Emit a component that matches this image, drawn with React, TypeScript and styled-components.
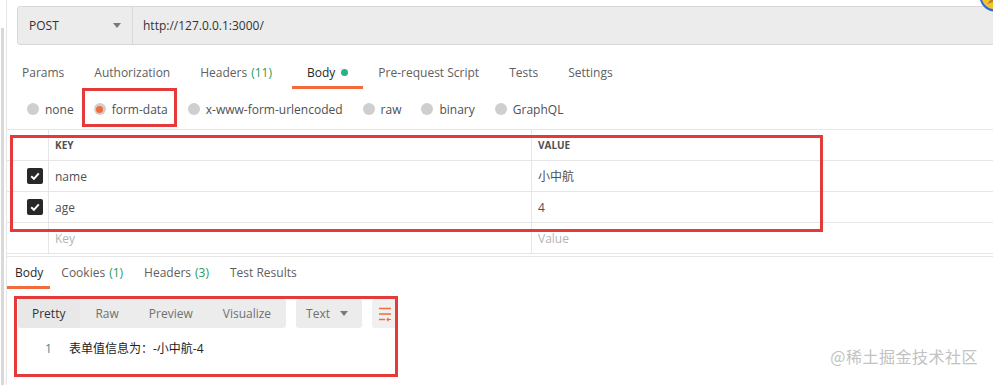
import styled, { createGlobalStyle } from "styled-components";

const GlobalStyle = createGlobalStyle`
    html, body {
        margin: 0;
        padding: 0;
        background: #ffffff;
        font-family: "Open Sans", "Noto Sans CJK SC", sans-serif;
        font-size: 12px;
        color: #505050;
        overflow: hidden;
    }
`;

const requestTabs = [
    { label: "Params" },
    { label: "Authorization" },
    { label: "Headers", count: "(11)" },
    { label: "Body", dot: true, active: true },
    { label: "Pre-request Script" },
    { label: "Tests" },
    { label: "Settings" },
];

const bodyModes = [
    { label: "none" },
    { label: "form-data", checked: true, marked: true },
    { label: "x-www-form-urlencoded" },
    { label: "raw" },
    { label: "binary" },
    { label: "GraphQL" },
];

const rows = [
    { key: "name", value: "小中航" },
    { key: "age", value: "4" },
];

const responseTabs = [
    { label: "Body", active: true },
    { label: "Cookies", count: "(1)" },
    { label: "Headers", count: "(3)" },
    { label: "Test Results" },
];

export default function App() {
    return (
        <>
            <GlobalStyle />
            <Page>
                <Gutter />
                <Main>
                    <UrlBar>
                        <Method>
                            POST
                            <Caret />
                        </Method>
                        <Url>http://127.0.0.1:3000/</Url>
                    </UrlBar>

                    <Tabs>
                        {requestTabs.map((t) => (
                            <Tab key={t.label} $active={t.active} $wide={t.dot}>
                                {t.label}
                                {t.count && <Count>{t.count}</Count>}
                                {t.dot && <Dot />}
                            </Tab>
                        ))}
                    </Tabs>

                    <Modes>
                        {bodyModes.map((m) => (
                            <Mode key={m.label} $marked={m.marked}>
                                <Radio $checked={m.checked} />
                                {m.label}
                            </Mode>
                        ))}
                    </Modes>

                    <Table>
                        <Highlight $left={3} $top={5} $width={807} $height={91} />
                        <Row $head>
                            <CheckCell />
                            <KeyCell>KEY</KeyCell>
                            <ValueCell>VALUE</ValueCell>
                        </Row>
                        {rows.map((r) => (
                            <Row key={r.key}>
                                <CheckCell>
                                    <Checkbox>
                                        <svg width="12" height="12" viewBox="0 0 12 12">
                                            <path d="M2.2 6.2 L4.9 8.8 L9.8 3.4" fill="none" stroke="#fff" strokeWidth="2" />
                                        </svg>
                                    </Checkbox>
                                </CheckCell>
                                <KeyCell>{r.key}</KeyCell>
                                <ValueCell>{r.value}</ValueCell>
                            </Row>
                        ))}
                        <Row>
                            <CheckCell />
                            <KeyCell $placeholder>Key</KeyCell>
                            <ValueCell $placeholder>Value</ValueCell>
                        </Row>
                    </Table>

                    <Response>
                        <Tabs $small>
                            {responseTabs.map((t) => (
                                <Tab key={t.label} $active={t.active} $small>
                                    {t.label}
                                    {t.count && <Count>{t.count}</Count>}
                                </Tab>
                            ))}
                        </Tabs>

                        <ResultBox>
                            <Highlight $left={-4} $top={-3} $width={378} $height={75} />
                            <Toolbar>
                                <Segments>
                                    <Segment $active>Pretty</Segment>
                                    <Segment>Raw</Segment>
                                    <Segment>Preview</Segment>
                                    <Segment>Visualize</Segment>
                                </Segments>
                                <Select>
                                    Text
                                    <Caret />
                                </Select>
                                <WrapButton>
                                    <svg width="14" height="16" viewBox="0 0 14 16">
                                        <path d="M1 2.5 H13 M1 8 H13 M1 13.5 H7" stroke="#f26b3a" strokeWidth="1.6" fill="none" />
                                        <path d="M9 13.5 H13 M10.5 11.8 L9 13.5 L10.5 15.2" stroke="#f26b3a" strokeWidth="1.2" fill="none" />
                                    </svg>
                                </WrapButton>
                            </Toolbar>
                            <CodeLine>
                                <LineNo>1</LineNo>
                                <Code>表单值信息为：-小中航-4</Code>
                            </CodeLine>
                        </ResultBox>
                    </Response>
                </Main>
                <Avatar>
                    <svg width="32" height="32" viewBox="0 0 32 32">
                        <circle cx="16" cy="16" r="14.5" fill="#f2c230" stroke="#2d6bd8" strokeWidth="2" />
                        <path d="M8 24 L20 10 L26 18 Z" fill="#8a5a1a" opacity="0.6" />
                    </svg>
                </Avatar>
                <Watermark>@稀土掘金技术社区</Watermark>
            </Page>
        </>
    );
}

const Page = styled.div`
    position: relative;
    display: flex;
    width: 993px;
    height: 385px;
    overflow: hidden;
`;

const Gutter = styled.div`
    width: 6px;
    flex-shrink: 0;
    &::before {
        content: "";
        display: block;
        margin: 28px 0 0 1px;
        width: 3px;
        height: 360px;
        background: #d9d9d9;
    }
`;

const Main = styled.div`
    flex: 1;
    border-left: 1px solid #e6e6e6;
    padding-top: 6px;
    min-width: 0;
`;

const UrlBar = styled.div`
    display: flex;
    height: 37px;
    margin-left: 10px;
    margin-right: -20px;
    background: #ececec;
    border: 1px solid #d8d8d8;
    border-radius: 3px;
`;

const Method = styled.div`
    display: flex;
    align-items: center;
    justify-content: space-between;
    box-sizing: border-box;
    width: 115px;
    padding: 0 11px 0 11px;
    border-right: 1px solid #d8d8d8;
    color: #333;
    font-size: 12px;
`;

const Caret = styled.span`
    width: 0;
    height: 0;
    border-left: 4px solid transparent;
    border-right: 4px solid transparent;
    border-top: 5px solid #7a7a7a;
`;

const Url = styled.div`
    display: flex;
    align-items: center;
    padding-left: 10px;
    color: #333;
`;

const Tabs = styled.div<{ $small?: boolean }>`
    display: flex;
    height: 32px;
    margin-top: ${(p) => (p.$small ? "0" : "12px")};
`;

const Tab = styled.div<{ $active?: boolean; $small?: boolean; $wide?: boolean }>`
    display: flex;
    align-items: center;
    gap: 4px;
    padding: ${(p) => (p.$small ? "1px 10px 0 11px" : "1px 15px 0")};
    margin-left: ${(p) => (p.$wide ? "5px" : "0")};
    color: ${(p) => (p.$active ? "#282828" : "#606060")};
    border-bottom: 3px solid ${(p) => (p.$active ? "#f26b3a" : "transparent")};
    &:first-child {
        padding-left: ${(p) => (p.$small ? "8px" : "15px")};
        padding-right: ${(p) => (p.$small ? "7px" : "15px")};
    }
`;

const Count = styled.span`
    color: #2b9a5b;
`;

const Dot = styled.span`
    width: 7px;
    height: 7px;
    margin-left: 2px;
    border-radius: 50%;
    background: #26b47f;
`;

const Modes = styled.div`
    display: flex;
    align-items: center;
    height: 40px;
    padding-left: 20px;
    gap: 20px;
`;

const Mode = styled.div<{ $marked?: boolean }>`
    position: relative;
    display: flex;
    align-items: center;
    gap: 6px;
    color: #505050;
    ${(p) =>
        p.$marked &&
        `
        &::after {
            content: "";
            position: absolute;
            left: -12px;
            top: -13px;
            width: 89px;
            height: 33px;
            border: 3px solid #e53a3a;
        }
    `}
`;

const Radio = styled.span<{ $checked?: boolean }>`
    display: flex;
    align-items: center;
    justify-content: center;
    width: 12px;
    height: 12px;
    border-radius: 50%;
    background: #cfcfcf;
    &::after {
        content: "";
        width: 7px;
        height: 7px;
        border-radius: 50%;
        background: ${(p) => (p.$checked ? "#f26b3a" : "transparent")};
    }
`;

const Table = styled.div`
    position: relative;
    border-top: 1px solid #e6e6e6;
`;

const Highlight = styled.div<{ $left: number; $top: number; $width: number; $height: number }>`
    position: absolute;
    left: ${(p) => p.$left}px;
    top: ${(p) => p.$top}px;
    width: ${(p) => p.$width}px;
    height: ${(p) => p.$height}px;
    border: 3px solid #e53a3a;
    pointer-events: none;
    z-index: 2;
`;

const Row = styled.div<{ $head?: boolean }>`
    display: grid;
    grid-template-columns: 41px 483px 1fr;
    height: 30px;
    border-bottom: 1px solid #e6e6e6;
    font-size: ${(p) => (p.$head ? "10px" : "12px")};
    font-weight: ${(p) => (p.$head ? 700 : 400)};
    color: #505050;
`;

const CheckCell = styled.div`
    display: flex;
    align-items: center;
    justify-content: flex-end;
    padding-right: 5px;
`;

const Checkbox = styled.span`
    display: flex;
    align-items: center;
    justify-content: center;
    width: 16px;
    height: 16px;
    border-radius: 2px;
    background: #282828;
`;

const KeyCell = styled.div<{ $placeholder?: boolean }>`
    display: flex;
    align-items: center;
    padding-left: 6px;
    border-left: 1px solid #e6e6e6;
    color: ${(p) => (p.$placeholder ? "#b5b5b5" : "inherit")};
`;

const ValueCell = styled(KeyCell)``;

const Response = styled.div`
    margin-top: 2px;
    border-top: 1px solid #e6e6e6;
`;

const ResultBox = styled.div`
    position: relative;
    margin: 10px 0 0 11px;
    width: 380px;
`;

const Toolbar = styled.div`
    display: flex;
    gap: 10px;
    height: 29px;
`;

const Segments = styled.div`
    display: flex;
    background: #ececec;
    border-radius: 3px;
`;

const Segment = styled.div<{ $active?: boolean }>`
    display: flex;
    align-items: center;
    padding: 0 15px;
    color: ${(p) => (p.$active ? "#333" : "#707070")};
    background: ${(p) => (p.$active ? "#e8e8e8" : "transparent")};
    border-radius: 3px;
    &:first-child {
        padding-left: 14px;
    }
`;

const Select = styled.div`
    display: flex;
    align-items: center;
    justify-content: space-between;
    width: 70px;
    box-sizing: border-box;
    padding: 0 14px 0 10px;
    background: #ececec;
    border-radius: 3px;
    color: #707070;
`;

const WrapButton = styled.div`
    display: flex;
    align-items: center;
    justify-content: center;
    width: 29px;
    background: #f0f0f0;
    border-radius: 3px;
`;

const CodeLine = styled.div`
    display: flex;
    align-items: center;
    height: 40px;
`;

const LineNo = styled.span`
    width: 24px;
    margin-left: 27px;
    color: #2f8f8f;
`;

const Code = styled.span`
    color: #222;
    font-size: 12px;
`;

const Avatar = styled.div`
    position: absolute;
    left: 979px;
    top: -20px;
`;

const Watermark = styled.div`
    position: absolute;
    right: 15px;
    bottom: 17px;
    font-size: 16px;
    color: #c2c2c2;
    font-family: "Noto Sans CJK SC", sans-serif;
    letter-spacing: 0.5px;
`;
